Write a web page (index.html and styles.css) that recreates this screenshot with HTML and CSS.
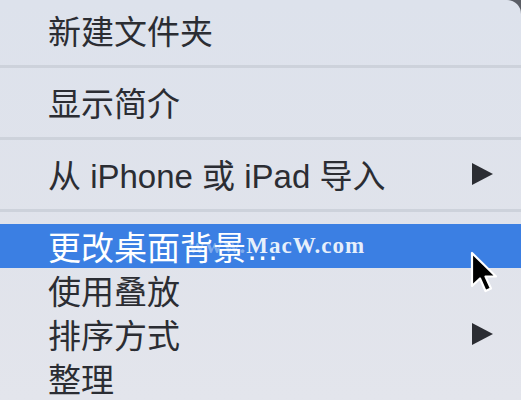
FILE: index.html
```html
<!DOCTYPE html>
<html lang="zh-CN">
<head>
  <meta charset="UTF-8">
  <title>桌面菜单</title>
  <link rel="stylesheet" href="styles.css">
</head>
<body>
  <div class="menu">
    <div class="item">新建文件夹</div>
    <div class="sep"></div>
    <div class="item">显示简介</div>
    <div class="sep"></div>
    <div class="item">
      <span>从 iPhone 或 iPad 导入</span>
      <svg class="arrow" width="21" height="22" viewBox="0 0 21 22"><path d="M0 0 L21 11 L0 22 Z"/></svg>
    </div>
    <div class="sep"></div>
    <div class="item selected">
      <span>更改桌面背景…</span>
      <span class="watermark"><span class="faint">www.</span>MacW.com</span>
    </div>
    <div class="item">使用叠放</div>
    <div class="item">
      <span>排序方式</span>
      <svg class="arrow" width="21" height="22" viewBox="0 0 21 22"><path d="M0 0 L21 11 L0 22 Z"/></svg>
    </div>
    <div class="item">整理</div>
    <!-- mouse pointer over the menu -->
    <svg class="cursor" width="30" height="42" viewBox="0 0 30 42">
      <path d="M2 2 L2 35 L10 27.5 L15.5 40 L21 37.5 L15.5 25.5 L26 25.5 Z" fill="#000" stroke="#fff" stroke-width="2.2" stroke-linejoin="round"/>
    </svg>
  </div>
</body>
</html>
```

FILE: styles.css
```css
body { margin: 0; background: #5b5e66; font-family: "Liberation Sans", "Noto Sans CJK SC", sans-serif; overflow: hidden; }
.menu { position: relative; height: 400px; padding-top: 8px; box-sizing: border-box; background: linear-gradient(180deg, #dde2ec 0%, #e0e3eb 60%, #e3e5ec 100%); border-top-right-radius: 14px; }
.item { height: 44px; display: flex; align-items: center; justify-content: space-between; padding: 0 28px 0 48px; font-size: 33px; color: #2b2d33; position: relative; }
.item.selected { background: #3b7fe3; color: #fff; }
.sep { height: 28px; display: flex; align-items: center; }
.sep::after { content: ""; display: block; width: 100%; height: 3px; background: #cdd2db; }
.arrow { fill: #2b2d33; }
.watermark { position: absolute; left: 188px; top: 9px; font-family: "Liberation Serif", serif; font-size: 23px; font-weight: bold; letter-spacing: 1px; color: rgba(255,255,255,0.88); }
.watermark .faint { color: rgba(255,255,255,0.35); }
.cursor { position: absolute; left: 470px; top: 251px; }
```
